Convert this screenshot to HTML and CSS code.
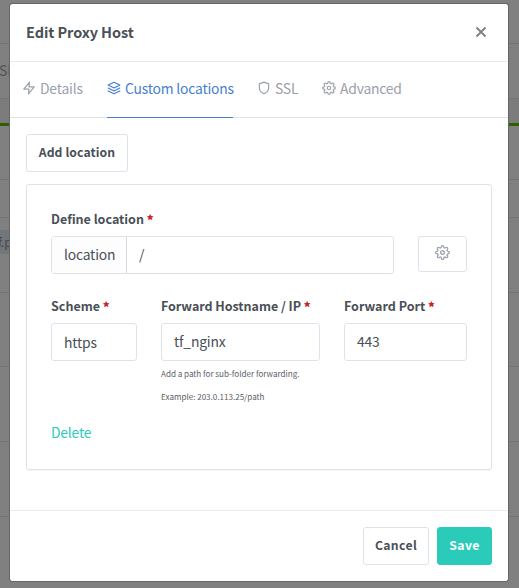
FILE: index.html
```html
<!DOCTYPE html>
<html lang="en">
<head>
<meta charset="utf-8">
<title>Edit Proxy Host</title>
<link rel="stylesheet" href="styles.css">
</head>
<body>
<svg class="symbols" aria-hidden="true">
  <symbol id="gear" viewBox="0 0 24 24"><circle cx="12" cy="12" r="3"/><path d="M19.4 15a1.65 1.65 0 0 0 .33 1.82l.06.06a2 2 0 1 1-2.83 2.83l-.06-.06a1.65 1.65 0 0 0-2.82 1.17V21a2 2 0 0 1-4 0v-.09a1.65 1.65 0 0 0-2.9-1.18l-.06.06a2 2 0 1 1-2.83-2.83l.06-.06A1.65 1.65 0 0 0 3.09 14H3a2 2 0 0 1 0-4h.09a1.65 1.65 0 0 0 1.18-2.9l-.06-.06a2 2 0 1 1 2.83-2.83l.06.06A1.65 1.65 0 0 0 10 3.09V3a2 2 0 0 1 4 0v.09a1.65 1.65 0 0 0 2.9 1.18l.06-.06a2 2 0 1 1 2.83 2.83l-.06.06A1.65 1.65 0 0 0 20.91 10H21a2 2 0 0 1 0 4h-.09a1.65 1.65 0 0 0-1.51 1z"/></symbol>
</svg>
<div class="backdrop">
  <div class="row r1"></div>
  <div class="row r2"><span>SI</span></div>
  <div class="row strip"></div>
  <div class="row r3"></div>
  <div class="row r4"></div>
  <div class="row r5"><span class="chip">f.p</span></div>
  <div class="row r6"></div>
  <div class="row r6b"></div>
  <div class="row r6b"></div>
</div>
<main class="modal">
  <header class="head">
    <h1>Edit Proxy Host</h1>
    <svg class="close" viewBox="0 0 12 12"><path d="M1.5 1.5l9 9M10.5 1.5l-9 9"/></svg>
  </header>
  <nav class="tabs">
    <a class="tab details"><svg class="icon" viewBox="0 0 24 24"><path d="M13 2L3 14h9l-1 8 10-12h-9l1-8z"/></svg><span>Details</span></a>
    <a class="tab active"><svg class="icon" viewBox="0 0 24 24"><path d="M12 2L2 7l10 5 10-5-10-5zM2 17l10 5 10-5M2 12l10 5 10-5"/></svg><span>Custom locations</span></a>
    <a class="tab ssl"><svg class="icon" viewBox="0 0 24 24"><path d="M12 22s8-4 8-10V5l-8-3-8 3v7c0 6 8 10 8 10z"/></svg><span>SSL</span></a>
    <a class="tab advanced"><svg class="icon"><use href="#gear"/></svg><span>Advanced</span></a>
  </nav>
  <section class="body">
    <button class="btn add"><span>Add location</span></button>
    <div class="card">
      <label class="label">Define location <b>*</b></label>
      <div class="line">
        <div class="group"><span class="addon">location</span><span class="path">/</span></div>
        <button class="btn cog"><svg class="icon"><use href="#gear"/></svg></button>
      </div>
      <div class="fields">
        <div><label class="label">Scheme <b>*</b></label><div class="input select">https</div></div>
        <div><label class="label host">Forward Hostname / IP <b>*</b></label><div class="input">tf_nginx</div>
          <p class="hint">Add a path for sub-folder forwarding.</p><p class="hint example">Example: 203.0.113.25/path</p></div>
        <div><label class="label">Forward Port <b>*</b></label><div class="input">443</div></div>
      </div>
      <a class="delete">Delete</a>
    </div>
  </section>
  <footer class="foot"><button class="btn cancel"><span>Cancel</span></button><button class="btn save"><span>Save</span></button></footer>
</main>
</body>
</html>
```
FILE: styles.css
```css
* { box-sizing: border-box; }
body { margin: 0; width: 519px; height: 588px; overflow: hidden; background: #808080; color: #495057; font: 13.9px/20px "Noto Sans CJK SC", "Open Sans", sans-serif; letter-spacing: -.2px; }
.symbols { position: absolute; width: 0; height: 0; }
.backdrop { position: absolute; inset: 0; overflow: hidden; }
.row { border-bottom: 1px solid #747474; overflow: hidden; white-space: nowrap; }
.r1 { height: 44px; }
.r2 { height: 55px; padding-top: 15px; font-size: 14px; line-height: 22px; color: #50555b; }
.r2 span { margin-left: -1px; }
.strip { height: 27px; border-bottom: 3px solid #2f6000; background: #7c7c7c; }
.r3 { height: 54px; }
.r4 { height: 38px; }
.r5 { height: 75px; padding-top: 12px; }
.r6 { height: 74px; }
.r6b { height: 75px; }
.chip { display: block; width: 30px; height: 24px; line-height: 23px; background: #737679; color: #42464d; font-size: 12px; margin-left: -2px; }
.modal { position: relative; width: 500px; height: 579px; margin: 3px 0 0 9px; background: #fff; background-clip: padding-box; border: 1px solid #666; border-radius: 3px; display: flex; flex-direction: column; }
.head { height: 58px; border-bottom: 1px solid #e9ecef; display: flex; align-items: center; justify-content: space-between; padding: 0 21px 2px 16px; flex: none; }
h1 { margin: 0; font-size: 14.5px; line-height: 20px; font-weight: 700; letter-spacing: -.08px; white-space: nowrap; }
.close { width: 12px; height: 12px; fill: none; stroke: #80858a; stroke-width: 2; }
.tabs { height: 56px; flex: none; display: flex; border-bottom: 1px solid #dee2e6; padding-left: 12px; color: #9aa0ac; }
.tab { height: 56px; display: flex; align-items: center; gap: 4px; white-space: nowrap; padding-bottom: 3px; border-bottom: 1px solid transparent; }
.tab span { margin-top: -1px; }
.details { width: 85px; }
.active { width: 126px; color: #467fcf; border-color: #467fcf; }
.ssl { margin-left: 24px; width: 65px; }
.icon { width: 14px; height: 14px; flex: none; fill: none; stroke: currentColor; stroke-width: 2; stroke-linecap: round; stroke-linejoin: round; overflow: visible; }
.body { flex: 1; padding: 16px; }
.btn { font: 700 12.2px/18px "Noto Sans CJK SC", "Open Sans", sans-serif; letter-spacing: .37px; color: #495057; height: 38px; border: 1px solid #dfe2ea; border-radius: 3px; background: #fff; padding: 0 0 2px; display: flex; align-items: center; justify-content: center; white-space: nowrap; }
.add { width: 102px; letter-spacing: .1px; }
.card { margin-top: 12px; height: 286px; border: 1px solid #dfe2ea; border-radius: 3px; padding: 24px; box-shadow: 0 1px 0 #f4f5f7; }
.label { display: block; height: 21px; margin-bottom: 6px; font-size: 12.5px; line-height: 20px; font-weight: 700; letter-spacing: 0; white-space: nowrap; }
.host { letter-spacing: -.04px; }
.label b { color: #cd201f; font-size: 13px; line-height: 1; position: relative; top: 1px; }
.line { display: flex; justify-content: space-between; height: 60px; }
.group { display: flex; width: 343px; height: 38px; border: 1px solid #dfe2ea; border-radius: 3px; line-height: 34px; }
.addon { width: 75px; padding-left: 12px; background: #fdfdfe; border-right: 1px solid #d5d8e0; }
.path { padding-left: 12px; }
.cog { width: 49px; height: 36px; color: #9aa0ac; }
.cog .icon { width: 15px; height: 15px; margin-top: -1px; }
.fields { display: grid; grid-template-columns: 86px 159px 123px; column-gap: 24px; height: 127px; }
.input { height: 38px; border: 1px solid #dfe2ea; border-radius: 3px; padding-left: 12px; line-height: 34px; }
.select { padding-top: 1px; }
.hint { margin: 6px 0 0; font-size: 8.1px; letter-spacing: -.02px; line-height: 14px; white-space: nowrap; color: #5b6167; }
.example { margin-top: 9px; }
.delete { color: #2bcbba; display: block; line-height: 18px; }
.foot { height: 71px; flex: none; border-top: 1px solid #e9ecef; padding: 16px; display: flex; justify-content: flex-end; gap: 8px; }
.cancel { width: 66px; }
.save { width: 55px; color: #fff; background: #2bcbba; border-color: #2bcbba; }
```
